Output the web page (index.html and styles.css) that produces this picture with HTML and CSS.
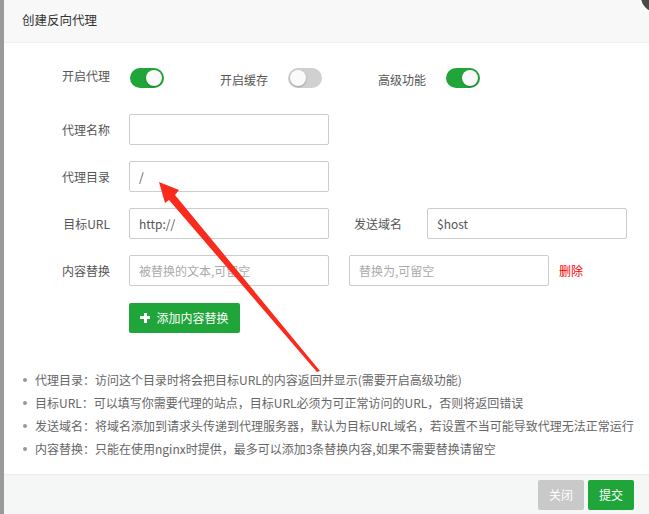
FILE: index.html
```html
<!DOCTYPE html>
<html lang="zh-CN">
<head>
    <meta charset="UTF-8">
    <title>创建反向代理</title>
    <link rel="stylesheet" href="styles.css">
</head>
<body>
    <div class="page-edge"></div>
    <div class="layer">
        <div class="layer-title">创建反向代理</div>
        <span class="layer-close"></span>
        <div class="layer-content">
            <div class="line switches">
                <div class="sw-group">
                    <span class="tname">开启代理</span>
                    <span class="switch on"></span>
                </div>
                <div class="sw-group">
                    <span class="tname low">开启缓存</span>
                    <span class="switch"></span>
                </div>
                <div class="sw-group">
                    <span class="tname low">高级功能</span>
                    <span class="switch on"></span>
                </div>
            </div>
            <div class="line">
                <span class="tname">代理名称</span>
                <input class="bt-input" type="text" value="">
            </div>
            <div class="line">
                <span class="tname">代理目录</span>
                <input class="bt-input" type="text" value="/">
            </div>
            <div class="line">
                <span class="tname">目标URL</span>
                <input class="bt-input" type="text" value="http://">
                <span class="tname sub">发送域名</span>
                <input class="bt-input" type="text" value="$host">
            </div>
            <div class="line">
                <span class="tname">内容替换</span>
                <input class="bt-input" type="text" placeholder="被替换的文本,可留空">
                <input class="bt-input second" type="text" placeholder="替换为,可留空">
                <a class="del-link">删除</a>
            </div>
            <div class="line">
                <button class="btn-add"><span class="plus"></span>添加内容替换</button>
            </div>
            <ul class="help">
                <li>代理目录：访问这个目录时将会把目标URL的内容返回并显示(需要开启高级功能)</li>
                <li>目标URL：可以填写你需要代理的站点，目标URL必须为可正常访问的URL，否则将返回错误</li>
                <li>发送域名：将域名添加到请求头传递到代理服务器，默认为目标URL域名，若设置不当可能导致代理无法正常运行</li>
                <li>内容替换：只能在使用nginx时提供，最多可以添加3条替换内容,如果不需要替换请留空</li>
            </ul>
        </div>
        <div class="layer-btn">
            <button class="btn-close">关闭</button>
            <button class="btn-submit">提交</button>
        </div>
    </div>
    <!-- red arrow drawn on top of the screenshot -->
    <svg class="mark-arrow" width="649" height="514" viewBox="0 0 649 514">
        <polygon fill="#fa2b1c" points="159,182 179,190 175,195 320,371 317,372 169,200 165,203"/>
    </svg>
</body>
</html>
```

FILE: styles.css
```css
html, body {
    margin: 0;
    padding: 0;
    height: 100%;
    overflow: hidden;
}
body {
    display: flex;
    font-family: "Noto Sans CJK SC", "Liberation Sans", sans-serif;
    font-size: 12px;
    color: #555;
    background: #fff;
}
.page-edge {
    width: 4px;
    flex: none;
    background: #9a9a9a;
}
.layer {
    flex: 1;
    height: 514px;
    display: flex;
    flex-direction: column;
    background: #fff;
}
.layer-title {
    height: 42px;
    line-height: 40px;
    padding-left: 18px;
    background: #f8f8f8;
    border-bottom: 1px solid #eee;
    color: #333;
    font-size: 12.5px;
    flex: none;
}
.layer-close {
    position: absolute;
    top: -20px;
    right: -24px;
    width: 30px;
    height: 30px;
    border-radius: 50%;
    background: #4a4a4a;
    border: 2px solid #fff;
}
.layer-content {
    flex: 1;
    padding: 25px 0 0 26px;
}
.line {
    display: flex;
    align-items: center;
    height: 31px;
    margin-bottom: 16px;
}
.line.switches {
    height: 20px;
    margin-bottom: 26px;
}
.sw-group {
    display: flex;
    align-items: center;
    width: 158px;
}
.tname {
    width: 80px;
    text-align: right;
    margin-right: 19px;
    flex: none;
}
.switches .tname {
    margin-right: 20px;
    position: relative;
    top: -3px;
}
.switches .tname.low {
    top: 1px;
}
.tname.sub {
    width: 73px;
    margin-right: 25px;
}
.switch {
    position: relative;
    width: 34px;
    height: 20px;
    border-radius: 10px;
    background: #d0d0d0;
    flex: none;
}
.switch::after {
    content: "";
    position: absolute;
    top: 2px;
    left: 2px;
    width: 16px;
    height: 16px;
    border-radius: 50%;
    background: #fafafa;
    box-shadow: 0 1px 2px rgba(0, 0, 0, 0.25);
}
.switch.on {
    background: #20a53a;
}
.switch.on::after {
    left: 16px;
}
.bt-input {
    width: 200px;
    height: 31px;
    box-sizing: border-box;
    border: 1px solid #ccc;
    border-radius: 2px;
    padding: 0 9px;
    font-family: inherit;
    font-size: 12px;
    color: #555;
    outline: none;
}
.bt-input::placeholder {
    color: #aaa;
}
.bt-input.second {
    margin-left: 20px;
}
.del-link {
    margin-left: 10px;
    color: #f00;
}
.btn-add {
    margin-left: 99px;
    width: 111px;
    height: 30px;
    border: none;
    border-radius: 2px;
    background: #20a53a;
    color: #fff;
    font-family: inherit;
    font-size: 12px;
    display: flex;
    align-items: center;
    justify-content: center;
    padding: 0;
}
.plus {
    position: relative;
    width: 10px;
    height: 10px;
    margin-right: 6px;
}
.plus::before, .plus::after {
    content: "";
    position: absolute;
    background: #fff;
}
.plus::before {
    left: 0;
    top: 3.5px;
    width: 10px;
    height: 3px;
}
.plus::after {
    left: 3.5px;
    top: 0;
    width: 3px;
    height: 10px;
}
.help {
    margin: 35px 0 0 -26px;
    padding: 0 0 0 31px;
    color: #666;
    line-height: 23px;
    list-style: none;
}
.help li {
    position: relative;
    white-space: nowrap;
}
.help li::before {
    content: "";
    position: absolute;
    left: -12px;
    top: 10px;
    width: 4px;
    height: 4px;
    border-radius: 50%;
    background: #999;
}
.layer-btn {
    flex: none;
    height: 39px;
    border-top: 1px solid #e9eded;
    background: #f5f7f7;
    display: flex;
    justify-content: flex-end;
    align-items: center;
    padding-right: 15px;
    gap: 4px;
}
.layer-btn button {
    width: 46px;
    height: 30px;
    border: none;
    border-radius: 2px;
    color: #fff;
    font-family: inherit;
    font-size: 12px;
    padding: 0;
}
.btn-close {
    background: #c9c9c9;
}
.btn-submit {
    background: #20a53a;
}
.mark-arrow {
    position: absolute;
    left: 0;
    top: 0;
    pointer-events: none;
}
```
